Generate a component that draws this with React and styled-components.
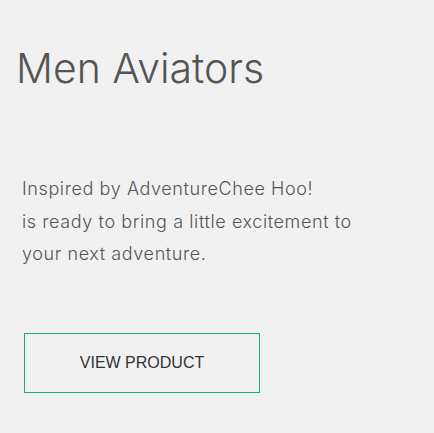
import styled, { createGlobalStyle } from "styled-components";

const GlobalStyle = createGlobalStyle`
    body {
        margin: 0;
        background: #f1f1f1;
        font-family: "Inter", "Liberation Sans", Arial, sans-serif;
    }
`;

const Wrapper = styled.div`
    display: flex;
    flex-direction: column;
    align-items: flex-start;
    padding: 43px 0 0 16px;
    min-height: 433px;
    box-sizing: border-box;
`;

const Title = styled.h1`
    margin: 0;
    font-size: 41px;
    font-weight: 300;
    line-height: 50px;
    color: #555;
`;

const Description = styled.p`
    margin: 80px 0 0 6px;
    font-size: 18px;
    font-weight: 300;
    letter-spacing: 0.6px;
    line-height: 32.5px;
    color: #555;
`;

const Button = styled.button`
    margin: 62px 0 0 8px;
    width: 236px;
    height: 60px;
    background: transparent;
    border: 1px solid #1aaa82;
    font-family: "Liberation Sans", Arial, sans-serif;
    font-size: 16px;
    color: #333;
    text-transform: uppercase;
    cursor: pointer;
`;

export default function App() {
    return (
        <>
            <GlobalStyle />
            <Wrapper>
                <Title>Men Aviators</Title>
                <Description>
                    Inspired by AdventureChee Hoo!
                    <br />
                    is ready to bring a little excitement to
                    <br />
                    your next adventure.
                </Description>
                <Button>View Product</Button>
            </Wrapper>
        </>
    );
}
